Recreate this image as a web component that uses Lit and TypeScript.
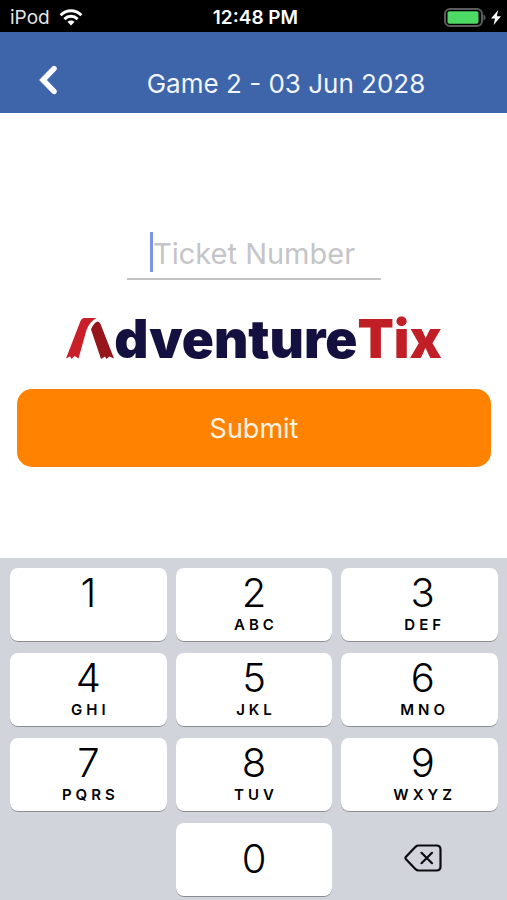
import { LitElement, html, css, svg } from "lit";
import { customElement, state } from "lit/decorators.js";

interface Key {
  digit: string;
  letters: string;
}

const KEYS: Key[] = [
  { digit: "1", letters: "" },
  { digit: "2", letters: "ABC" },
  { digit: "3", letters: "DEF" },
  { digit: "4", letters: "GHI" },
  { digit: "5", letters: "JKL" },
  { digit: "6", letters: "MNO" },
  { digit: "7", letters: "PQRS" },
  { digit: "8", letters: "TUV" },
  { digit: "9", letters: "WXYZ" },
];

@customElement("status-bar")
export class StatusBar extends LitElement {
  static styles = css`
    :host {
      display: grid;
      grid-template-columns: 1fr auto 1fr;
      align-items: center;
      height: 32px;
      padding: 3px 6px 0 10px;
      box-sizing: border-box;
      background: #000;
      color: #fff;
      font-size: 19px;
      line-height: 24px;
    }
    .side {
      display: flex;
      align-items: center;
      gap: 9px;
    }
    .power {
      justify-content: flex-end;
      gap: 5px;
    }
    .carrier {
      color: #e4e4e4;
    }
    .time {
      font-weight: 600;
    }
    svg {
      display: block;
    }
  `;

  render() {
    return html`
      <div class="side">
        <span class="carrier">iPod</span>
        <svg width="24" height="17" viewBox="0 0 24 17" aria-label="Wi-Fi">
          <g fill="none" stroke="#fff" stroke-width="3">
            <path d="M1.6 6.2C7.5 .4 16.5 .4 22.4 6.2" />
            <path d="M5.4 10.1C9.2 6.4 14.8 6.4 18.6 10.1" />
          </g>
          <path d="M8.4 12.8C10.5 10.9 13.5 10.9 15.6 12.8L12 16.4Z" fill="#fff" />
        </svg>
      </div>
      <span class="time">12:48 PM</span>
      <div class="side power">
        <svg width="42" height="19" viewBox="0 0 42 19" aria-label="Battery">
          <rect x="1" y="1" width="37" height="17" rx="5" fill="none" stroke="#5c5c5e" stroke-width="2" />
          <rect x="3.5" y="3.3" width="31" height="12.4" rx="2" fill="#4cd964" />
          <path d="M39.5 6.5C42.2 7.2 42.2 11.8 39.5 12.5Z" fill="#5c5c5e" />
        </svg>
        <svg width="10" height="15" viewBox="0 0 10 15" aria-label="Charging">
          <path d="M7.2 0L0 8.6H4L2.6 15L10 6.2H5.8Z" fill="#fff" />
        </svg>
      </div>
    `;
  }
}

@customElement("number-pad")
export class NumberPad extends LitElement {
  static styles = css`
    :host {
      display: grid;
      grid-template-columns: repeat(3, 1fr);
      grid-auto-rows: 74px;
      gap: 11px 9px;
      padding: 10px 9px 3px 10px;
      background: #d1d4da;
    }
    button {
      font: inherit;
      color: #000;
      border: 0;
      margin: 0;
      padding: 0;
      display: flex;
      flex-direction: column;
      align-items: center;
      cursor: pointer;
    }
    .key {
      background: #fff;
      border-radius: 8px;
      box-shadow: inset 0 -1px 0 #8b8d91;
    }
    .key:nth-child(3n),
    .erase {
      padding-left: 6px;
    }
    .digit {
      margin-top: 1px;
      font-size: 40px;
      line-height: 48px;
      font-weight: 300;
    }
    .letters {
      font-size: 15px;
      line-height: 16px;
      font-weight: 600;
      letter-spacing: 4px;
      padding-left: 4px;
    }
    .zero,
    .erase {
      justify-content: center;
    }
    .zero {
      grid-column: 2;
      padding-bottom: 4px;
    }
    .erase {
      background: none;
      padding-bottom: 4px;
    }
  `;

  private press(value: string) {
    this.dispatchEvent(new CustomEvent("key", { detail: value }));
  }

  render() {
    return html`
      ${KEYS.map(
        (k) => html`
          <button class="key" type="button" @click=${() => this.press(k.digit)}>
            <span class="digit">${k.digit}</span>
            <span class="letters">${k.letters}</span>
          </button>
        `,
      )}
      <button class="key zero" type="button" @click=${() => this.press("0")}>
        <span class="digit">0</span>
      </button>
      <button class="erase" type="button" aria-label="Delete" @click=${() => this.press("")}>
        <svg width="38" height="28" viewBox="0 0 38 28" fill="none" stroke="#0b0c10" stroke-width="2.2" stroke-linejoin="round" stroke-linecap="round">
          <path d="M14.5 1.5H32.5Q36.5 1.5 36.5 5.5V22.5Q36.5 26.5 32.5 26.5H14.5Q13 26.5 11.8 25.4L2 15.2Q.9 14 2 12.8L11.8 2.6Q13 1.5 14.5 1.5Z" />
          <path d="M17.5 8.8L28 19.2M28 8.8L17.5 19.2" />
        </svg>
      </button>
    `;
  }
}

@customElement("app-root")
export class AppRoot extends LitElement {
  static styles = css`
    :host {
      display: flex;
      flex-direction: column;
      min-height: 100vh;
      background: #fff;
      font-family: Inter, "Liberation Sans", sans-serif;
    }
    .header {
      display: grid;
      grid-template-columns: 65px 1fr;
      align-items: center;
      height: 81px;
      background: #3e64aa;
      color: #f1f5fc;
    }
    .back {
      display: flex;
      align-items: center;
      justify-content: flex-end;
      height: 44px;
      margin: 14px 0 0 24px;
      padding: 0 7px 0 0;
      border: 0;
      background: none;
      cursor: pointer;
    }
    .title {
      margin: 22px 0 0;
      font-size: 26px;
      line-height: 32px;
      font-weight: 400;
      text-align: center;
    }
    .content {
      flex: 1;
      display: flex;
      flex-direction: column;
      align-items: center;
      padding: 119px 16px 0 17px;
    }
    .field {
      display: flex;
      width: 254px;
      max-width: 100%;
      box-sizing: border-box;
      padding: 0 0 6px 23px;
      border-bottom: 2px solid #c3c3c6;
    }
    .caret {
      flex: none;
      width: 3px;
      height: 40px;
      background: #7b94ea;
    }
    .input {
      flex: 1;
      min-width: 0;
      height: 42px;
      margin-bottom: -2px;
      padding: 0;
      border: 0;
      outline: 0;
      background: none;
      font: inherit;
      font-size: 29px;
      color: #222;
      caret-color: transparent;
    }
    .input::placeholder {
      color: #c5c5c8;
      opacity: 1;
    }
    .logo {
      display: flex;
      align-items: flex-end;
      margin-top: 33px;
      height: 53px;
      font-size: 53px;
      line-height: 53px;
      font-weight: 900;
      font-variation-settings: "opsz" 14;
      color: #14103f;
    }
    .mark {
      flex: none;
      margin-bottom: 7px;
    }
    .accent {
      color: #c01f26;
    }
    .submit {
      align-self: stretch;
      height: 78px;
      margin: 23px 0;
      border: 0;
      border-radius: 15px;
      background: #ff8200;
      color: #fff3e2;
      font: inherit;
      font-size: 27px;
      cursor: pointer;
    }
  `;

  @state() private ticket = "";

  private onKey(e: CustomEvent<string>) {
    this.ticket = e.detail ? this.ticket + e.detail : this.ticket.slice(0, -1);
  }

  private mark() {
    return svg`
      <path d="M18 0H30.5C25.5 2.5 22.5 6.5 20.5 12L12.5 40.5L8.5 38L5.5 41L4 38.5L0 40.5L14.5 3Q15.8 0 18 0Z" fill="#c81f28" />
      <path d="M25 11.5Q27.5 5 31.5 3.5Q33.5 3.5 34.5 6L48 40.5L43.5 38.5L40.5 41L39 38.5L35 41Z" fill="#96161d" />
    `;
  }

  render() {
    return html`
      <status-bar></status-bar>
      <header class="header">
        <button class="back" type="button" aria-label="Back">
          <svg width="20" height="30" viewBox="0 0 20 30" fill="none" stroke="#fff" stroke-width="5.5" stroke-linecap="round">
            <path d="M16 3.6L5 15L16 26.4" stroke-linejoin="miter" />
          </svg>
        </button>
        <h1 class="title">Game 2 - 03 Jun 2028</h1>
      </header>
      <main class="content">
        <div class="field">
          <span class="caret"></span>
          <input
            class="input"
            type="text"
            inputmode="numeric"
            aria-label="Ticket Number"
            placeholder="Ticket Number"
            .value=${this.ticket}
            @input=${(e: Event) => (this.ticket = (e.target as HTMLInputElement).value)}
          />
        </div>
        <div class="logo" role="img" aria-label="AdventureTix">
          <svg class="mark" width="48" height="41" viewBox="0 0 48 41">${this.mark()}</svg>
          <span>dventure</span><span class="accent">Tix</span>
        </div>
        <button class="submit" type="button">Submit</button>
      </main>
      <number-pad @key=${this.onKey}></number-pad>
    `;
  }
}
